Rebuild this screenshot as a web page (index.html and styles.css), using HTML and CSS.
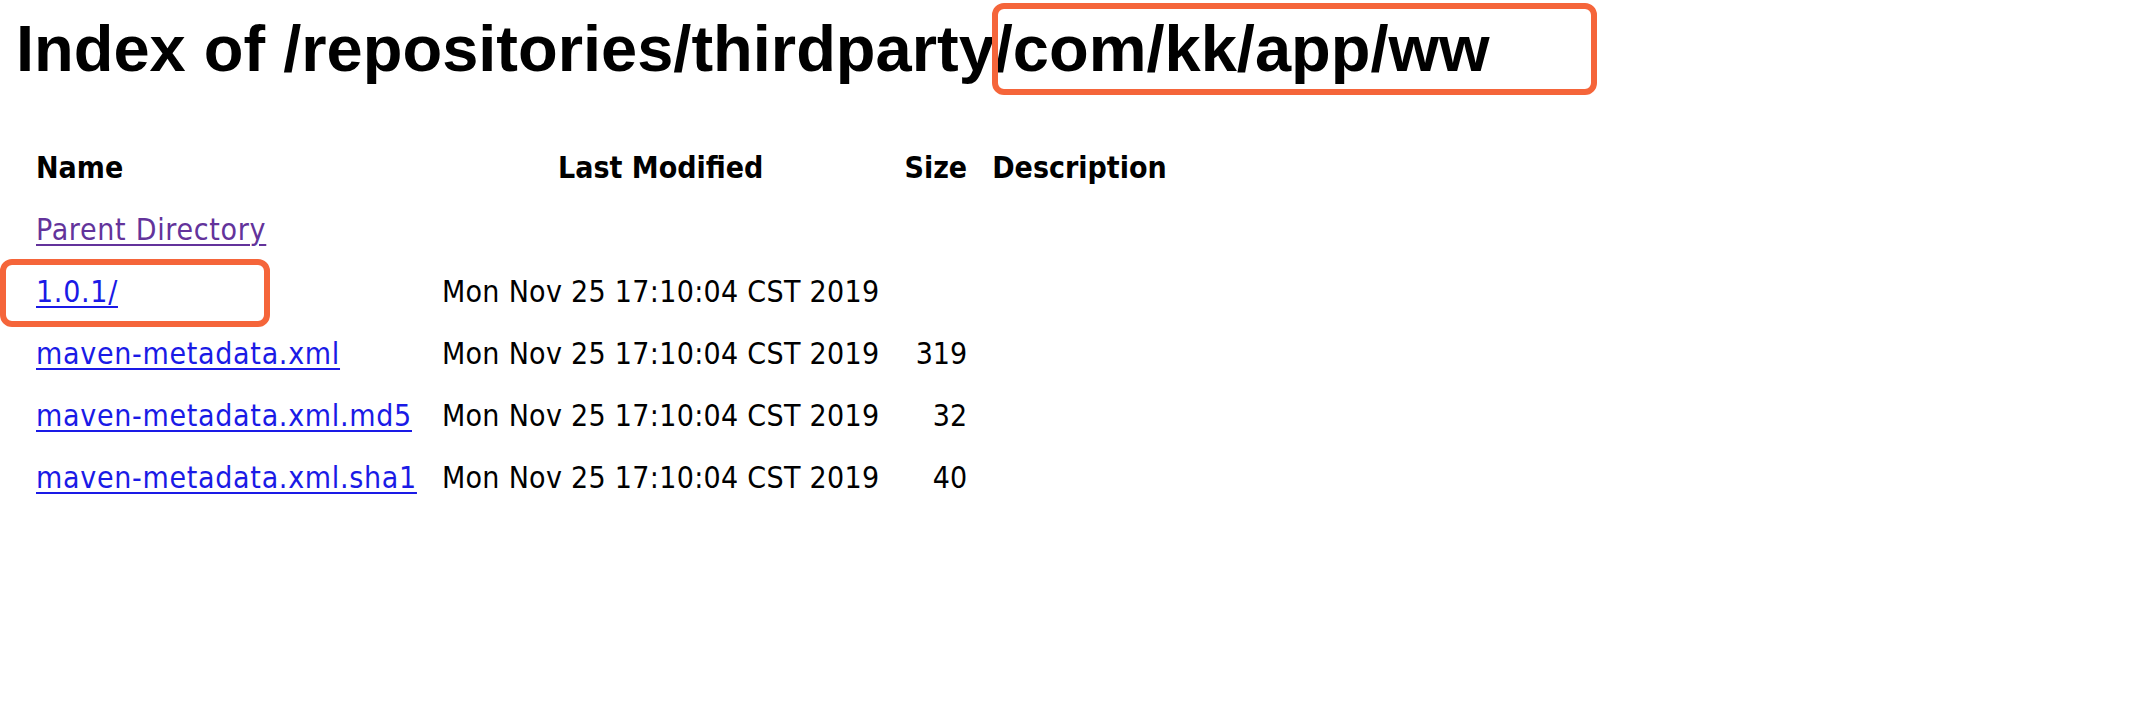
FILE: index.html
```html
<!DOCTYPE html>
<html>
<head>
<meta charset="utf-8">
<title>Index of /repositories/thirdparty/com/kk/app/ww</title>
<link rel="stylesheet" href="styles.css">
</head>
<body>
<h1 class="title">Index of /repositories/thirdparty/com/kk/app/ww</h1>
<table class="listing">
  <tr>
    <th class="name-col">Name</th>
    <th>Last Modified</th>
    <th>Size</th>
    <th class="desc-col">Description</th>
  </tr>
  <tr>
    <td class="name"><a class="visited" href="#">Parent Directory</a></td>
    <td></td><td></td><td></td>
  </tr>
  <tr>
    <td class="name"><a href="#">1.0.1/</a></td>
    <td class="date">Mon Nov 25 17:10:04 CST 2019</td>
    <td class="size"></td><td></td>
  </tr>
  <tr>
    <td class="name"><a href="#">maven-metadata.xml</a></td>
    <td class="date">Mon Nov 25 17:10:04 CST 2019</td>
    <td class="size">319</td><td></td>
  </tr>
  <tr>
    <td class="name"><a href="#">maven-metadata.xml.md5</a></td>
    <td class="date">Mon Nov 25 17:10:04 CST 2019</td>
    <td class="size">32</td><td></td>
  </tr>
  <tr>
    <td class="name"><a href="#">maven-metadata.xml.sha1</a></td>
    <td class="date">Mon Nov 25 17:10:04 CST 2019</td>
    <td class="size">40</td><td></td>
  </tr>
</table>
<div class="mark mark-path"></div>
<div class="mark mark-version"></div>
</body>
</html>
```

FILE: styles.css
```css
html, body {
  background: #ffffff;
}
body {
  margin: 0 16px;
  color: #000000;
  font-family: "DejaVu Sans Condensed", "DejaVu Sans", sans-serif;
  font-size: 30px;
}
.title {
  margin: 11px 0 0 0;
  font-family: "Liberation Sans", Arial, sans-serif;
  font-weight: bold;
  font-size: 65px;
  line-height: 75px;
  white-space: nowrap;
}
.listing {
  margin: 51px 0 0 -2px;
  border-collapse: separate;
  border-spacing: 19px 0;
}
.listing th,
.listing td {
  padding: 0 3px;
  line-height: 62px;
  white-space: nowrap;
}
.listing th {
  font-weight: bold;
  text-align: center;
}
.listing th.name-col,
.listing th.desc-col {
  text-align: left;
}
.name a {
  color: #1a1ae6;
  letter-spacing: 0.7px;
  text-decoration: underline;
  text-underline-offset: 4px;
  text-decoration-thickness: 2px;
}
.name a.visited {
  color: #63339b;
}
.date {
  text-align: left;
  letter-spacing: 0.3px;
}
.size {
  text-align: right;
}
.mark {
  position: absolute;
  border: 6px solid #f5653a;
  border-radius: 12px;
  box-sizing: border-box;
}
.mark-path {
  left: 992px;
  top: 3px;
  width: 605px;
  height: 92px;
}
.mark-version {
  left: 0;
  top: 259px;
  width: 270px;
  height: 68px;
}
```
